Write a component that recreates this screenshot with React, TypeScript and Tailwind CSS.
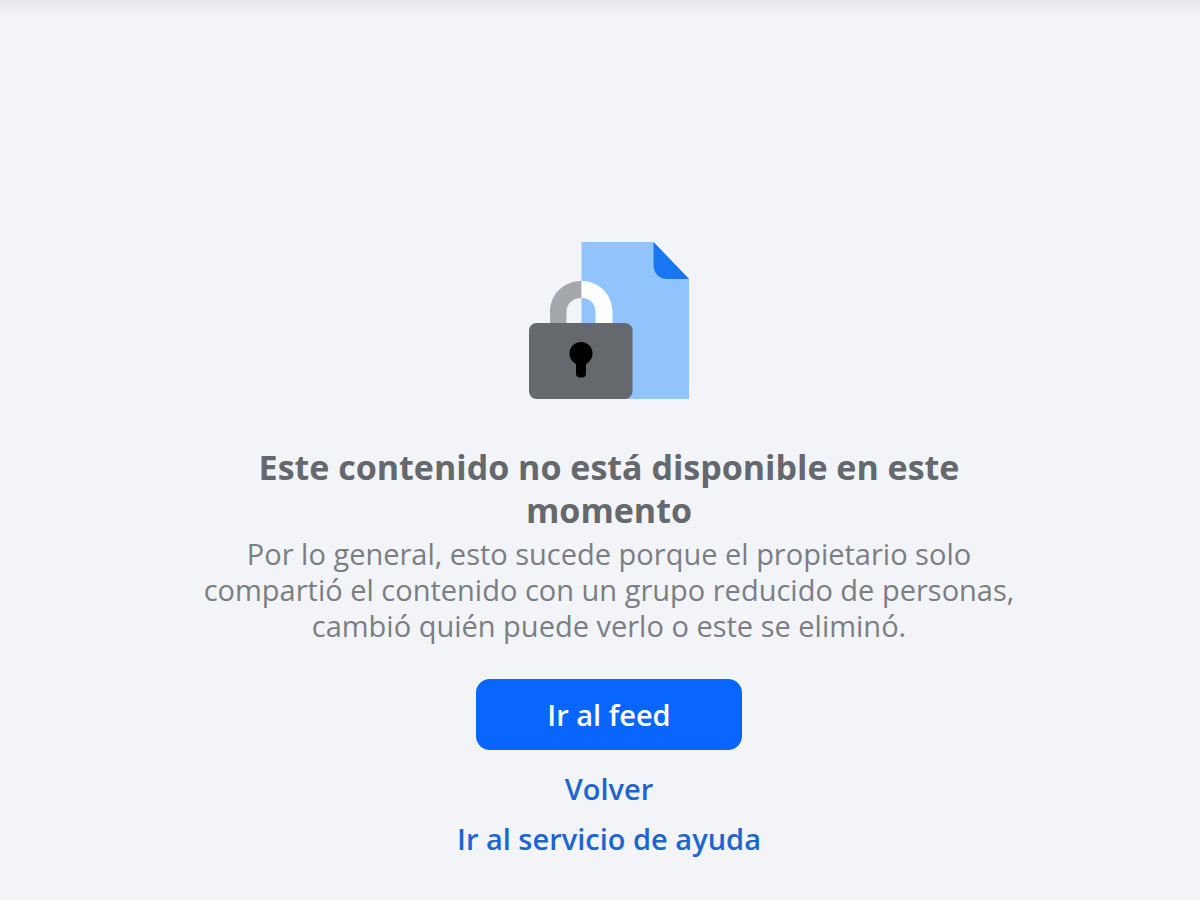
import * as React from 'react';

function LockedFileIcon() {
  return (
    <svg className="h-[157px] w-40" viewBox="0 0 160 157" fill="none" aria-hidden="true">
      <path d="M52.5 0H124.5L160 37V157H52.5Z" fill="#91c3fd" />
      <path d="M124.5 0L160 37H138.500C130 37 124.500 31 124.500 23Z" fill="#1876f2" />
      <path d="M21 82V70C21 52.500 34.500 39 52.500 39V56C43.500 56 37.500 62 37.500 70V82Z" fill="#a4a7ab" />
      <path d="M83.500 82V70C83.500 52.500 70 39 52.500 39V56C61 56 66.500 62 66.500 70V82Z" fill="#fff" />
      <rect y="81" width="103.500" height="76" rx="7.500" fill="#65686c" />
      <circle cx="52" cy="111.500" r="11.500" fill="#000" />
      <rect x="47" y="115" width="10" height="20.500" rx="4" fill="#000" />
    </svg>
  );
}

export default function App() {
  return (
    <main className="min-h-screen bg-[#f2f4f8] font-['Open_Sans',sans-serif]">
      <div className="h-4 bg-linear-to-b from-[#e5e6ea] to-[#f2f4f8]" />
      <section className="flex flex-col items-center pt-[226px] pb-9 pl-[18px] text-center">
        <LockedFileIcon />
        <h1 className="mt-[47px] max-w-[760px] text-[34px] leading-[43px] font-bold text-[#65686c]">
          Este contenido no está disponible en este momento
        </h1>
        <p className="mt-1 max-w-[840px] text-[29px] leading-[36px] text-[#7b7e83]">
          Por lo general, esto sucede porque el propietario solo compartió el contenido con un grupo
          reducido de personas, cambió quién puede verlo o este se eliminó.
        </p>
        <button
          type="button"
          className="mt-[35px] h-[71px] w-[266px] rounded-[14px] bg-[#0866ff] text-[29px] font-semibold text-white"
        >
          Ir al feed
        </button>
        <a href="#volver" className="mt-[21px] text-[29px] leading-[36px] font-semibold text-[#1d66d2]">
          Volver
        </a>
        <a href="#ayuda" className="mt-[14px] text-[29px] leading-[36px] font-semibold text-[#1d66d2]">
          Ir al servicio de ayuda
        </a>
      </section>
    </main>
  );
}
